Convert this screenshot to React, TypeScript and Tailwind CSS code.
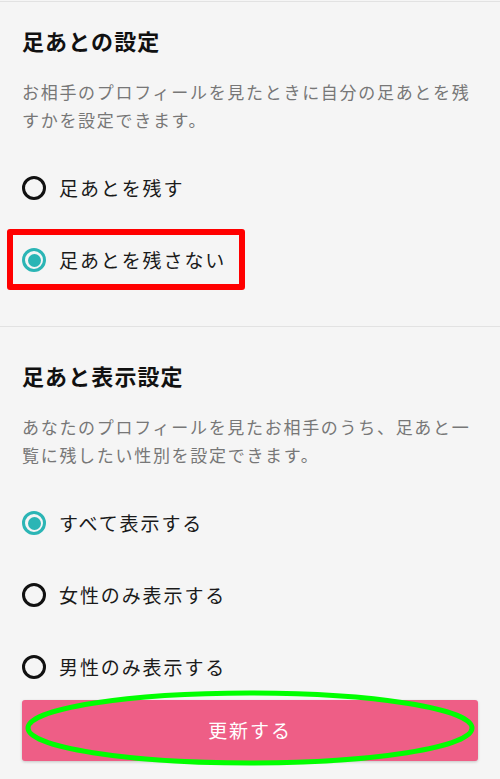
import React from 'react'

const font = { fontFamily: '"Noto Sans CJK JP", "Noto Sans", sans-serif' }

// ── Radio ────────────────────────────────────────────────────────────────

function Radio({ checked }: { checked: boolean }) {
  if (checked) {
    return (
      <span className="flex h-6 w-6 flex-shrink-0 items-center justify-center rounded-full border-[3px] border-[#2bb5b5]">
        <span className="h-[13px] w-[13px] rounded-full bg-[#2bb5b5]" />
      </span>
    )
  }
  return <span className="h-6 w-6 flex-shrink-0 rounded-full border-[3px] border-[#111]" />
}

function Option({ label, checked, marked }: { label: string; checked: boolean; marked?: boolean }) {
  return (
    <div className="relative flex h-[72px] items-center">
      <Radio checked={checked} />
      <span className="ml-[13px] text-[19px] leading-7 tracking-[0.1em] text-[#1a1a1a]">{label}</span>
      {marked && (
        <div className="pointer-events-none absolute left-[-15px] top-[5px] h-[61px] w-[238px] rounded-[3px] border-[6px] border-[#ff0000]" />
      )}
    </div>
  )
}

// ── Section ──────────────────────────────────────────────────────────────

function Section({
  title,
  text,
  options,
  className,
}: {
  title: string
  text: string
  options: { label: string; checked: boolean; marked?: boolean }[]
  className: string
}) {
  return (
    <section className={`px-[22px] ${className}`}>
      <h2 className="text-[22px] font-bold leading-[30px] tracking-[0.05em] text-[#111]">{title}</h2>
      <p className="mt-[23px] text-[17px] leading-7 tracking-[0.1em] text-[#777]">{text}</p>
      <div className="mt-[18px]">
        {options.map((o, i) => (
          <Option key={i} {...o} />
        ))}
      </div>
    </section>
  )
}

export default function App() {
  return (
    <div className="flex h-[779px] w-[500px] flex-col overflow-hidden bg-[#f5f5f5]" style={font}>
      <div className="flex-1 overflow-hidden">
        <div className="mt-px border-t border-[#e2e2e2]" />
        <Section
          className="pt-[23px] pb-[30px]"
          title="足あとの設定"
          text="お相手のプロフィールを見たときに自分の足あとを残すかを設定できます。"
          options={[
            { label: '足あとを残す', checked: false },
            { label: '足あとを残さない', checked: true, marked: true },
          ]}
        />
        <div className="border-t border-[#e2e2e2]" />
        <Section
          className="pt-[33px]"
          title="足あと表示設定"
          text="あなたのプロフィールを見たお相手のうち、足あと一覧に残したい性別を設定できます。"
          options={[
            { label: 'すべて表示する', checked: true },
            { label: '女性のみ表示する', checked: false },
            { label: '男性のみ表示する', checked: false },
          ]}
        />
      </div>
      <div className="px-[22px] pt-[14px] pb-[18px]">
        <div className="relative">
          <button className="flex h-[61px] w-full items-center justify-center rounded-[3px] bg-[#ee5e86] text-[19px] tracking-[0.1em] text-white shadow-[0_1px_3px_rgba(0,0,0,0.2)]">
            更新する
          </button>
          <svg
            className="pointer-events-none absolute left-[3px] top-[-10px]"
            width="450"
            height="76"
            viewBox="0 0 450 76"
          >
            <ellipse cx="225" cy="38" rx="222" ry="35" fill="none" stroke="#00ff00" strokeWidth="5" />
          </svg>
        </div>
      </div>
    </div>
  )
}
